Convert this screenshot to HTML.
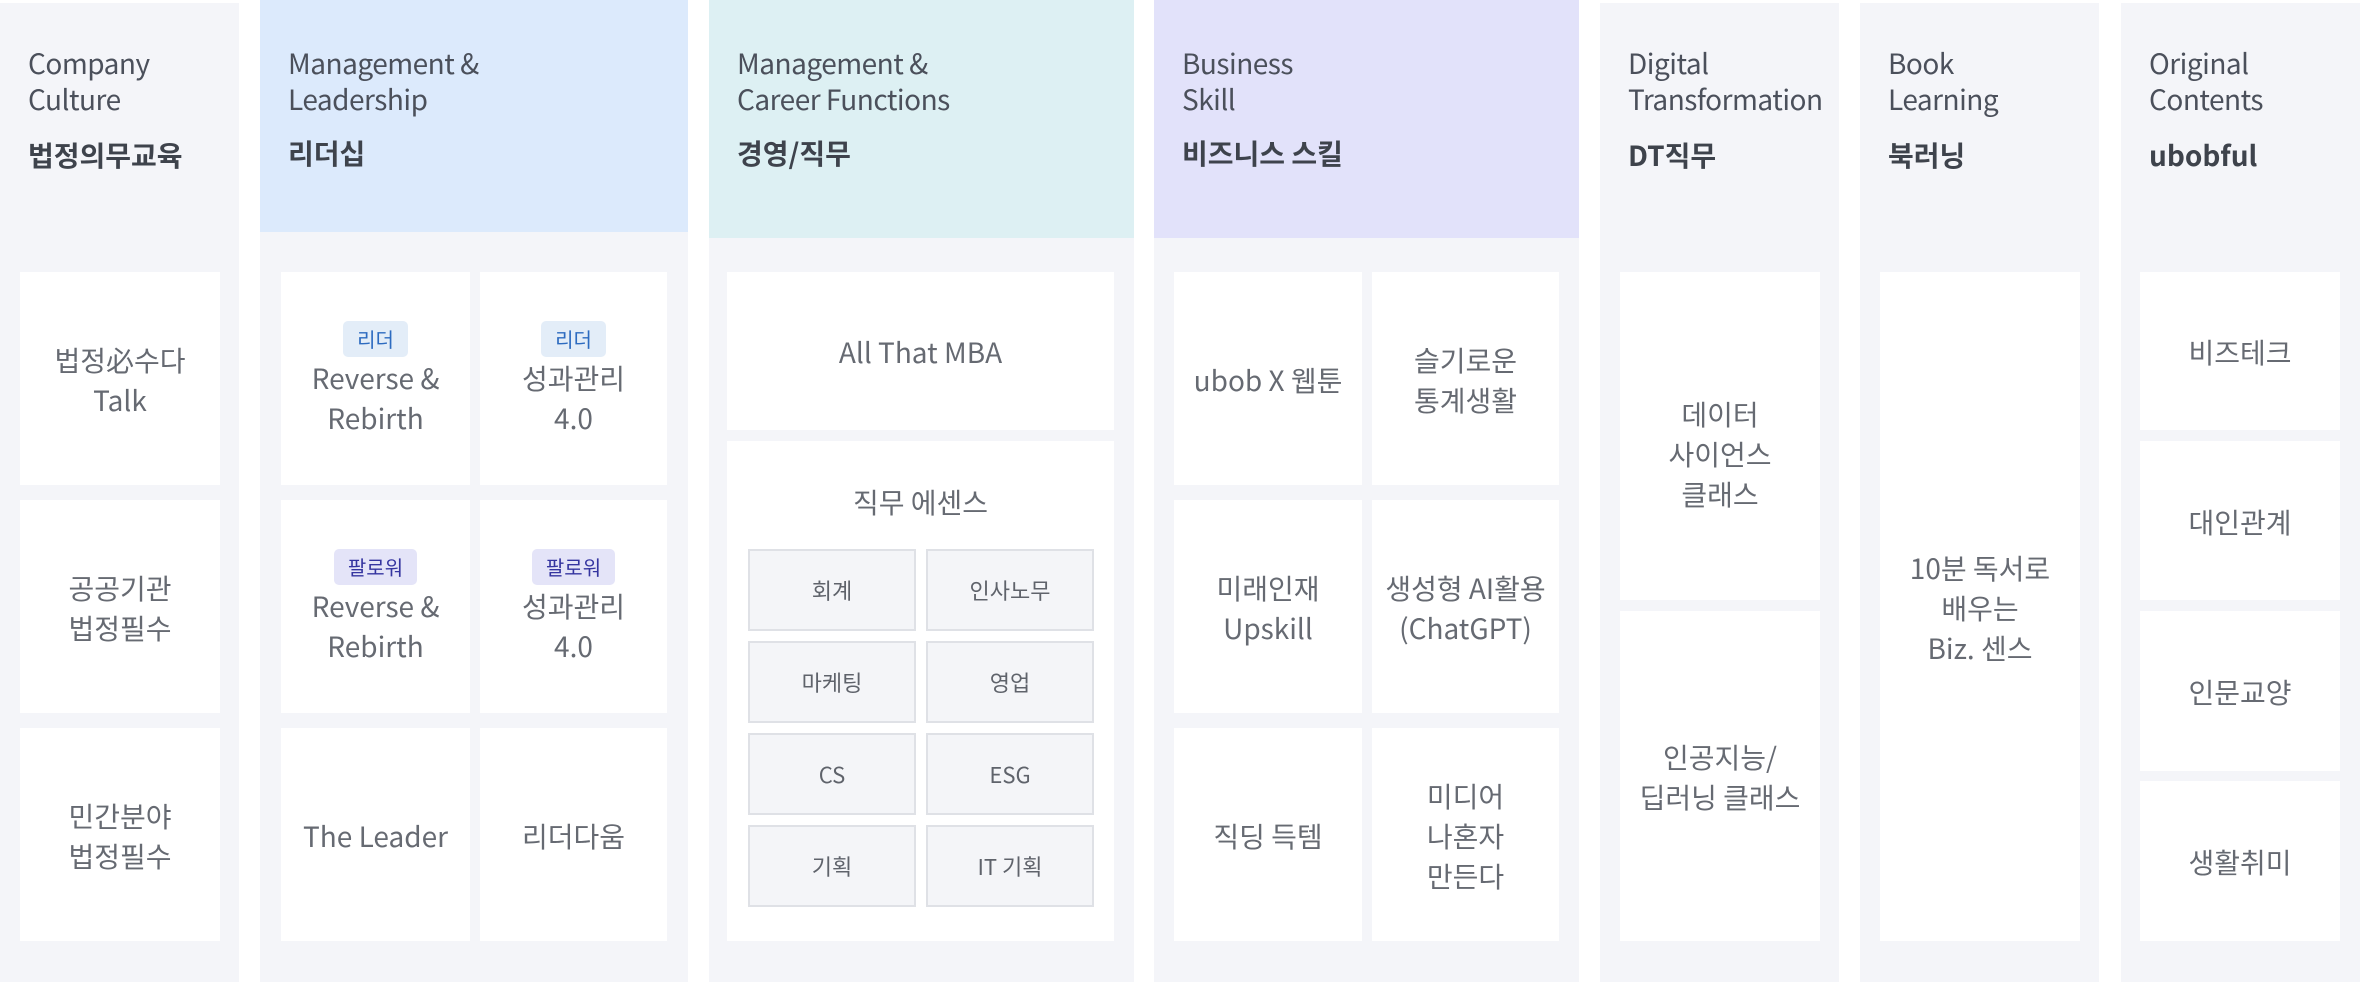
<!DOCTYPE html>
<html><head><meta charset="utf-8">
<style>
*{margin:0;padding:0;box-sizing:border-box}
body{width:2360px;height:982px;background:#fff;position:relative;overflow:hidden;font-family:"Noto Sans CJK KR","Liberation Sans",sans-serif;}
.col{position:absolute;top:3px;height:979px;background:#f4f5f9}
.hd{position:absolute;left:0;top:0;right:0}
.t{position:absolute;left:28px;top:42px;font-size:28px;line-height:36px;color:#4b505b;letter-spacing:-0.5px}
.k{position:absolute;left:28px;top:134px;font-size:28px;line-height:36px;color:#3e434c;font-weight:bold}
.w .t{top:45px}.w .k{top:135px}
.c{position:absolute;background:#fff;display:flex;flex-direction:column;align-items:center;justify-content:center;text-align:center;font-size:28px;line-height:40px;color:#666a72;padding-top:2px}
.b{font-size:20px;line-height:36px;height:36px;padding:0 14px;border-radius:5px;margin-bottom:1px}
.b1{background:#e3edf8;color:#2d6bc0}
.b2{background:#e4e4f8;color:#3535a0}
.ch{position:absolute;background:#f4f5f8;border:2px solid #dfe1e6;display:flex;align-items:center;justify-content:center;font-size:22px;color:#5f636b}
</style></head><body>

<div class="col" style="left:0;width:239px"><div class="t">Company<br>Culture</div><div class="k">법정의무교육</div></div>
<div class="col w" style="left:260px;width:428px;top:0;height:982px"><div class="hd" style="height:232px;background:#dceafc"></div><div class="t">Management &amp;<br>Leadership</div><div class="k">리더십</div></div>
<div class="col w" style="left:709px;width:425px;top:0;height:982px"><div class="hd" style="height:238px;background:#ddf0f3"></div><div class="t">Management &amp;<br>Career Functions</div><div class="k">경영/직무</div></div>
<div class="col w" style="left:1154px;width:425px;top:0;height:982px"><div class="hd" style="height:238px;background:#e2e2fa"></div><div class="t">Business<br>Skill</div><div class="k">비즈니스 스킬</div></div>
<div class="col" style="left:1600px;width:239px"><div class="t">Digital<br>Transformation</div><div class="k">DT직무</div></div>
<div class="col" style="left:1860px;width:239px"><div class="t">Book<br>Learning</div><div class="k">북러닝</div></div>
<div class="col" style="left:2121px;width:239px"><div class="t">Original<br>Contents</div><div class="k">ubobful</div></div>

<!-- col1 -->
<div class="c" style="left:20px;top:272px;width:200px;height:213px">법정必수다<br>Talk</div>
<div class="c" style="left:20px;top:500px;width:200px;height:213px">공공기관<br>법정필수</div>
<div class="c" style="left:20px;top:728px;width:200px;height:213px">민간분야<br>법정필수</div>

<!-- col2 -->
<div class="c" style="left:281px;top:272px;width:189px;height:213px"><span class="b b1">리더</span>Reverse &amp;<br>Rebirth</div>
<div class="c" style="left:480px;top:272px;width:187px;height:213px"><span class="b b1">리더</span>성과관리<br>4.0</div>
<div class="c" style="left:281px;top:500px;width:189px;height:213px"><span class="b b2">팔로워</span>Reverse &amp;<br>Rebirth</div>
<div class="c" style="left:480px;top:500px;width:187px;height:213px"><span class="b b2">팔로워</span>성과관리<br>4.0</div>
<div class="c" style="left:281px;top:728px;width:189px;height:213px">The Leader</div>
<div class="c" style="left:480px;top:728px;width:187px;height:213px">리더다움</div>

<!-- col3 -->
<div class="c" style="left:727px;top:272px;width:387px;height:158px">All That MBA</div>
<div class="c" style="left:727px;top:441px;width:387px;height:500px;justify-content:flex-start;padding-top:41px">직무 에센스</div>
<div class="ch" style="left:748px;top:549px;width:168px;height:82px">회계</div>
<div class="ch" style="left:926px;top:549px;width:168px;height:82px">인사노무</div>
<div class="ch" style="left:748px;top:641px;width:168px;height:82px">마케팅</div>
<div class="ch" style="left:926px;top:641px;width:168px;height:82px">영업</div>
<div class="ch" style="left:748px;top:733px;width:168px;height:82px">CS</div>
<div class="ch" style="left:926px;top:733px;width:168px;height:82px">ESG</div>
<div class="ch" style="left:748px;top:825px;width:168px;height:82px">기획</div>
<div class="ch" style="left:926px;top:825px;width:168px;height:82px">IT 기획</div>

<!-- col4 -->
<div class="c" style="left:1174px;top:272px;width:188px;height:213px">ubob X 웹툰</div>
<div class="c" style="left:1372px;top:272px;width:187px;height:213px">슬기로운<br>통계생활</div>
<div class="c" style="left:1174px;top:500px;width:188px;height:213px">미래인재<br>Upskill</div>
<div class="c" style="left:1372px;top:500px;width:187px;height:213px">생성형 AI활용<br>(ChatGPT)</div>
<div class="c" style="left:1174px;top:728px;width:188px;height:213px">직딩 득템</div>
<div class="c" style="left:1372px;top:728px;width:187px;height:213px">미디어<br>나혼자<br>만든다</div>

<!-- col5 -->
<div class="c" style="left:1620px;top:272px;width:200px;height:328px;padding-top:36px">데이터<br>사이언스<br>클래스</div>
<div class="c" style="left:1620px;top:611px;width:200px;height:330px">인공지능/<br>딥러닝 클래스</div>

<!-- col6 -->
<div class="c" style="left:1880px;top:272px;width:200px;height:669px">10분 독서로<br>배우는<br>Biz. 센스</div>

<!-- col7 -->
<div class="c" style="left:2140px;top:272px;width:200px;height:158px">비즈테크</div>
<div class="c" style="left:2140px;top:441px;width:200px;height:159px">대인관계</div>
<div class="c" style="left:2140px;top:611px;width:200px;height:160px">인문교양</div>
<div class="c" style="left:2140px;top:781px;width:200px;height:160px">생활취미</div>
</body></html>
